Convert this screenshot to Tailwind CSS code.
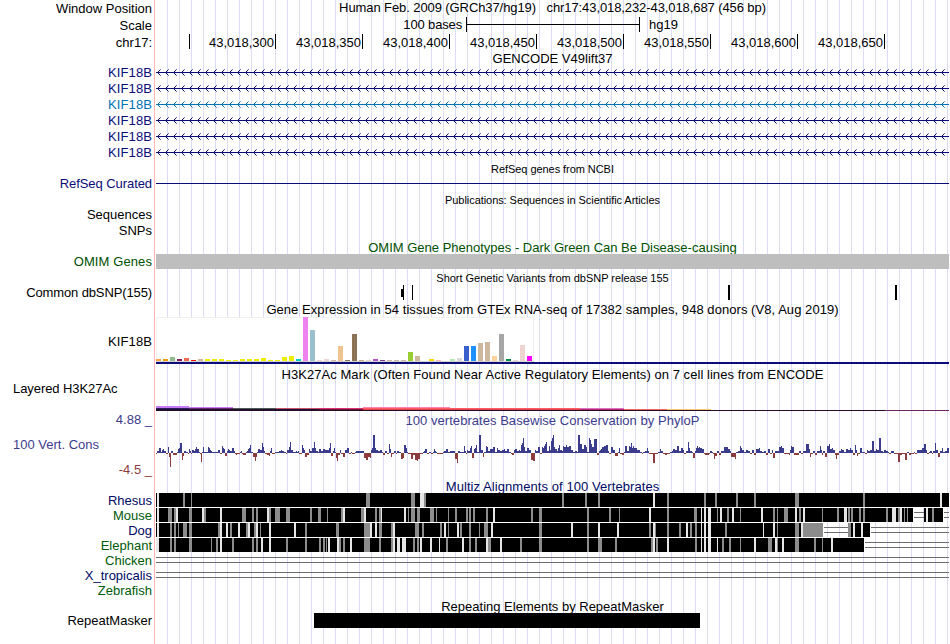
<!DOCTYPE html>
<html lang="en">
<head>
    <meta charset="UTF-8">
    <meta name="viewport" content="width=device-width, initial-scale=1.0">
    <title>chr17:43,018,232-43,018,687 hg19</title>
    <script src="https://cdn.jsdelivr.net/npm/@tailwindcss/browser@4"></script>
</head>
<body class="bg-white overflow-hidden">

    <div class="flex w-[950px] h-[644px] overflow-hidden font-['Liberation_Sans',Arial,sans-serif] text-[13px] leading-4 text-black whitespace-nowrap">

        <!-- Labels -->
        <div class="w-[154px] shrink-0 pt-px pr-0.5 flex flex-col text-right text-[#0c0c78]">
            <div class="h-[17px] text-black">Window Position</div>
            <div class="h-[17px] text-black">Scale</div>
            <div class="h-[30px] text-black">chr17:</div>
            <div class="h-4 tracking-[0.1px]">KIF18B</div>
            <div class="h-4 tracking-[0.1px]">KIF18B</div>
            <div class="h-4 tracking-[0.1px] text-[#0073b4]">KIF18B</div>
            <div class="h-4 tracking-[0.1px]">KIF18B</div>
            <div class="h-4 tracking-[0.1px]">KIF18B</div>
            <div class="h-[31px] tracking-[0.1px]">KIF18B</div>
            <div class="h-[31px] tracking-[-0.07px]">RefSeq Curated</div>
            <div class="h-4 text-black">Sequences</div>
            <div class="h-[31px] text-black">SNPs</div>
            <div class="h-[31px] tracking-[0.1px] text-[#005000]">OMIM Genes</div>
            <div class="h-[49px] tracking-[-0.12px] text-black">Common dbSNP(155)</div>
            <div class="h-[47px] tracking-[0.1px] text-black">KIF18B</div>
            <div class="h-[31px] pl-[13px] text-left tracking-[-0.07px] text-black">Layered H3K27Ac</div>
            <div class="h-[25px] text-[#3c3c8c]">4.88 _</div>
            <div class="h-[25px] pl-[13px] text-left text-[#3c3c8c]">100 Vert. Cons</div>
            <div class="h-[31px] text-[#8c3c3c]">-4.5 _</div>
            <div class="h-[15px] text-[#000a64]">Rhesus</div>
            <div class="h-[15px] text-[#005a0a]">Mouse</div>
            <div class="h-[15px] text-[#000a64]">Dog</div>
            <div class="h-[15px] text-[#005a0a]">Elephant</div>
            <div class="h-[15px] text-[#005a0a]">Chicken</div>
            <div class="h-[15px] text-[#000a64]">X_tropicalis</div>
            <div class="h-[30px] text-[#005a0a]">Zebrafish</div>
            <div class="text-black">RepeatMasker</div>
        </div>
        <div class="w-0.5 shrink-0 border-l border-[#ffb4b4]"></div>

        <!-- Tracks -->
        <div class="w-[793px] flex flex-col text-center bg-[repeating-linear-gradient(90deg,transparent_0_11px,#dcdcf5_11px_12px)]">
            <div class="h-4 whitespace-pre tracking-[-0.09px]">Human Feb. 2009 (GRCh37/hg19)   chr17:43,018,232-43,018,687 (456 bp)</div>
            <div class="h-[18px] pt-px flex text-left">
                <div class="w-[307px] pr-px text-right tracking-[-0.15px]">100 bases</div>
                <svg class="ml-[3px] w-[174px] h-[15px]" viewBox="0 0 174 15" shape-rendering="crispEdges"><path d="M0 0h1v7h172v-7h1v15h-1v-7h-172v7h-1z"/></svg>
                <div class="ml-[9px]">hg19</div>
            </div>
            <div id="ruler" class="h-4 flex text-right"></div>
            <div class="h-[14px] pt-px">GENCODE V49lift37</div>
            <svg id="genes" class="w-[793px] h-24" viewBox="156 64 793 96" shape-rendering="crispEdges"></svg>
            <div class="h-[18px] pt-px text-[11px] tracking-[-0.06px]">RefSeq genes from NCBI</div>
            <div class="h-[13px] pt-[5px]"><div class="h-px bg-[#0c0c78]"></div></div>
            <div class="h-12 pt-px text-[11px] tracking-[-0.06px]">Publications: Sequences in Scientific Articles</div>
            <div class="h-[15px] pt-px text-[#005000]">OMIM Gene Phenotypes - Dark Green Can Be Disease-causing</div>
            <div class="h-[15px] bg-[#bebebe]"></div>
            <div class="h-4 pt-px text-[11px] tracking-[-0.02px]">Short Genetic Variants from dbSNP release 155</div>
            <svg class="w-[793px] h-4" viewBox="156 285 793 16" shape-rendering="crispEdges">
                <path d="M403 285h1v15h-1zM401 289h2v8h-2zM412 285h1v15h-1zM728 285h2v15h-2zM895 285h2v15h-2z"/>
            </svg>
            <div class="h-4 pt-px tracking-[0.055px]">Gene Expression in 54 tissues from GTEx RNA-seq of 17382 samples, 948 donors (V8, Aug 2019)</div>
            <svg id="gtex" class="w-[793px] h-[49px]" viewBox="156 317 793 49" shape-rendering="crispEdges"></svg>
            <div class="h-10 pt-px tracking-[0.05px]">H3K27Ac Mark (Often Found Near Active Regulatory Elements) on 7 cell lines from ENCODE</div>
            <svg id="h3k27" class="w-[793px] h-[6px]" viewBox="156 406 793 6" shape-rendering="crispEdges"></svg>
            <div class="h-4 pt-px tracking-[0.04px] text-[#3c3c8c]">100 vertebrates Basewise Conservation by PhyloP</div>
            <svg id="cons" class="w-[793px] h-[50px]" viewBox="156 428 793 50" shape-rendering="crispEdges"></svg>
            <div class="h-[15px] pt-px tracking-[0.07px] text-[#000a64]">Multiz Alignments of 100 Vertebrates</div>
            <svg id="multiz" class="w-[793px] h-[105px]" viewBox="156 493 793 105" shape-rendering="crispEdges"></svg>
            <div class="h-[15px] pt-px">Repeating Elements by RepeatMasker</div>
            <div class="ml-[158px] w-[386px] h-[15px] bg-black"></div>
        </div>
    </div>

    <script>
        const put = (id, html) => document.getElementById(id).innerHTML = html
        const rect = (x, y, w, h, fill) => `<rect x="${x}" y="${y}" width="${w}" height="${h}" fill="${fill}"/>`

        // base position ruler: the first tick has no label
        const ticks = [[34, ''], [86, '43,018,300'], [87, '43,018,350'], [87, '43,018,400'], [87, '43,018,450'], [87, '43,018,500'], [87, '43,018,550'], [87, '43,018,600'], [87, '43,018,650']]
        put('ruler', ticks.map(([w, t]) => `<div class="h-[15px] pt-px pr-px border-r border-black" style="width:${w}px">${t}</div>`).join(''))

        // transcripts on the minus strand
        let s = ''
        for (let i = 0; i < 6; i++) {
            const y = 72 + i * 16
            const c = i == 2 ? '#0073b4' : '#0c0c78'
            s += rect(156, y, 793, 1, c)
            for (let x = 157; x < 948; x += 8) {
                s += `<path fill="${c}" d="M${x + 1} ${y - 1}h1v3h-1zM${x + 2} ${y - 2}h1v1h-1zM${x + 2} ${y + 2}h1v1h-1z"/>`
                s += `<path fill="${c}" opacity=".6" d="M${x + 3} ${y - 3}h1v1h-1zM${x + 3} ${y + 3}h1v1h-1z"/>`
            }
        }
        put('genes', s)

        // GTEx tissues: height, colour
        const gtex = [
            [2, '#ffa54f'], [2, '#ee9a00'], [4, '#8fbc8f'], [2, '#8b1c62'], [3, '#ee6a50'], [1, '#ff0000'], [2, '#cdb79e'],
            [2, '#eeee00'], [2, '#eeee00'], [2, '#eeee00'], [1, '#eeee00'], [1, '#eeee00'], [2, '#eeee00'], [2, '#eeee00'],
            [2, '#eeee00'], [3, '#eeee00'], [1, '#eeee00'], [1, '#eeee00'], [4, '#eeee00'], [5, '#eeee00'], [2, '#00cdcd'],
            [44, '#ee82ee'], [31, '#9ac0cd'], [1, '#eed5d2'], [2, '#eed5d2'], [1, '#cdb79e'], [15, '#eec591'], [1, '#8b7355'],
            [27, '#8b7355'], [1, '#cdaa7d'], [1, '#eed5d2'], [2, '#b452cd'], [1, '#7a378b'], [1, '#cdb79e'], [1, '#cdb79e'],
            [1, '#cdb79e'], [9, '#9acd32'], [5, '#cdb79e'], [0, '#7a67ee'], [2, '#ffd700'], [1, '#ffb6c1'], [0, '#cd9b1d'],
            [2, '#b4eeb4'], [3, '#d9d9d9'], [15, '#3a5fcd'], [15, '#1e90ff'], [18, '#cdb79e'], [19, '#cdb79e'], [5, '#ffd39b'],
            [27, '#a6a6a6'], [2, '#008b45'], [1, '#eed5d2'], [16, '#eed5d2'], [5, '#ff00ff']
        ]
        s = rect(156, 317, 378, 45, '#f0f0f0') + rect(157, 318, 376, 43, '#ffffff') + rect(156, 361, 378, 1, '#d2d2d2')
        gtex.forEach(([h, c], i) => { s += rect(156 + i * 7, 361 - h, 5, h, c) })
        s += rect(156, 362, 793, 2, '#0c0c78')
        put('gtex', s)

        // layered H3K27Ac: x, y, width, height, colour
        put('h3k27', [
            [156, 406, 33, 2, '#c57cf5'], [189, 407, 44, 1, '#c57cf5'],
            [156, 408, 33, 1, '#2b1c66'], [189, 408, 44, 1, '#6b2a70'], [233, 408, 43, 1, '#505a55'],
            [276, 408, 43, 1, '#c8506a'], [319, 408, 44, 1, '#d83070'],
            [156, 409, 163, 1, '#1e1030'], [319, 409, 44, 1, '#701238'],
            [363, 407, 87, 1, '#ff82b4'], [363, 408, 217, 1, '#fa5f64'], [580, 408, 44, 1, '#d873c8'],
            [363, 409, 217, 1, '#e8404f'], [580, 409, 44, 1, '#c02468'], [624, 409, 43, 1, '#f86464'], [667, 409, 44, 1, '#f5c86e'],
            [156, 410, 729, 1, '#280c24'], [885, 410, 64, 1, '#6e2460']
        ].map(r => rect(...r)).join(''))

        // phyloP: each entry is "offset:height" and runs up to the next one, offsets in thirds of a pixel
        const cons = [
            [150, '18:-1 21:2 27:5 33:1 36:3 39:4 42:2 48:-1 54:6 57:-4 60:-14 63:2 69:-2 81:1 84:4 87:5 90:10 96:-7 99:-3 102:2 108:1 114:-1 117:4 120:2 123:-1 126:3 132:2 135:4 138:6 141:4 147:1 150:-1 153:-9 156:1 159:6 162:1 174:6 177:5 180:3 183:2 186:1 204:3 210:-1 216:7 219:5 222:4 225:-3 231:2 234:4 237:3 240:2 246:5 252:2 255:-1 258:-2 261:-1 270:1 273:2 276:-1 279:-2 288:1 291:2 294:4 297:5 300:8 303:1 309:-4 315:-8 318:-4 321:1 324:4 330:3 336:10 339:6 342:2 345:-1 351:-2 357:-3 360:2 363:5 366:-1 375:1 387:2 393:3 396:2 402:1 408:-1 411:3 417:6 420:11 423:3 429:1 438:2 441:1 444:2 447:-1 456:8 459:5 462:3 465:-4 471:-2 477:4 480:2 486:5 492:11 495:5 498:2 504:1 507:4 513:2 519:4 525:3 537:5 540:10 543:-3 549:2 552:5 555:1 558:-5 561:-8 564:-2 570:3 573:-1 579:-4 585:3 591:5 597:-1 603:1 606:-1 615:1 618:2 642:-5 648:-7 654:-4 660:-5 663:3 666:5 669:18 675:5 678:3 684:2 690:3 696:1 699:-2 705:2 711:-1 717:9 720:4 723:-4 726:-1 732:2 738:-1 741:2 747:1 753:-6 759:-5 762:8 768:5 771:1 774:-1'],
            [410, '3:-6 9:-2 15:-7 21:-8 24:-6 30:-1 39:1 42:2 45:4 51:-1 57:1 63:-1 69:1 72:4 75:2 78:1 81:-1 99:1 102:2 108:4 114:1 120:2 135:-6 141:-10 144:2 150:1 162:7 165:2 168:-1 171:3 174:2 180:5 183:7 186:-5 192:4 195:5 198:8 201:1 207:18 213:3 219:-4 222:1 228:7 231:6 234:2 240:4 249:6 255:1 261:5 264:3 270:2 276:3 282:4 285:2 291:4 297:1 303:-1 306:-2 312:3 315:4 321:2 327:3 330:2 333:8 336:10 339:15 342:6 345:2 351:5 357:3 363:-7 369:-8 375:3 378:2 384:6 390:-1 396:6 399:5 402:7 405:9 408:11 411:2 417:7 420:3 423:12 426:15 429:18 432:6 435:4 441:2 444:5 447:8 450:3 456:2 459:7 462:6 468:8 471:6 477:7 483:3 489:1 495:2 501:1 504:18 510:9 516:4 522:8 528:6 531:1 537:15 540:13 543:9 546:6 552:14 561:-2 567:2 570:3 573:4 576:6 582:7 588:8 594:2 597:-1 603:6 609:3 615:-3 624:1 627:5 630:-1 636:-2 642:1 645:7 651:2 657:7 660:6 663:10 666:5 669:7 672:5 681:3 690:1 696:-1 699:1 705:2 711:5 714:2 717:-1 729:-10 735:-1 744:1 750:4 753:2 759:-1 765:-2 771:-1'],
            [670, '0:1 6:2 9:4 15:3 21:7 27:2 33:5 39:3 42:-1 48:2 54:11 57:5 60:2 66:1 69:-5 75:2 78:5 81:7 84:5 87:6 90:5 96:4 102:-1 105:-2 117:-1 120:2 126:1 129:-1 132:-6 135:-3 141:2 147:-2 153:2 162:6 174:4 180:2 183:-4 195:-6 198:1 204:2 210:7 213:5 216:3 222:1 228:3 234:2 240:-1 246:3 252:-2 258:4 267:5 270:2 276:1 282:2 288:-2 294:4 300:-1 306:3 309:-5 315:2 327:6 333:7 336:5 342:-1 357:-2 360:3 363:7 366:6 372:-2 387:2 393:-1 399:2 408:9 417:4 420:-4 423:-1 429:2 435:-2 441:2 450:7 453:3 456:-2 459:2 465:-4 471:7 477:9 480:4 486:5 489:3 495:-2 498:-6 501:-2 507:2 513:4 516:3 522:1 528:4 534:3 540:5 543:3 549:-2 555:8 558:3 561:-3 564:-1 570:5 576:1 585:-1 591:3 594:2 600:3 606:12 612:2 618:4 621:3 627:15 633:2 639:1 642:3 648:2 654:1 657:-1 663:2 672:-1 684:-9 690:-2 696:-1 705:-7 711:1 717:-2 723:-1 732:1 735:-1 741:3 756:5 762:9 768:3 771:-1 777:1 780:2 786:-1 789:2 795:10 798:3 804:-4 810:2 816:5 819:1 825:2 831:5']
        ]
        const vals = cons.flatMap(([x0, t]) => t.split(' ').map(p => p.split(':').map(Number)).map(([x, h]) => [x0 + x / 3, h]))
        s = ''
        vals.forEach(([x, h], i) => {
            const w = (vals[i + 1] ? vals[i + 1][0] : 949) - x
            s += h > 0 ? rect(x, 453 - h, w, h, '#3c3c8c') : rect(x, 453, w, -h, '#8c3c3c')
        })
        put('cons', s)

        // alignment blocks; cuts = "from-to" with G mid grey, L light grey
        const multiz = [
            { blocks: [[156, 949]], cuts: [
                [150, 'L21-27 G99-105 G123-126 G648-660 G783-795'],
                [410, 'L30-42 G42-48 G456-462 G525-531 G564-570 L729-735 G771-777'],
                [670, 'G102-108 G135-141 G198-204 G252-258 G375-387 G579-585 L810-816']] },
            { blocks: [[156, 913], [924, 943]], cuts: [
                [150, 'L21-27 G54-66 G72-78 L78-84 G117-126 L156-162 G162-168 L210-216 G276-288 G306-312 G318-324 L351-357 G357-363 G375-390 G408-420 G480-486 G504-513 G531-534 G573-579 L579-585 G633-642 L642-648 G675-681 G687-693 L693-696 L762-768 G774-777 G783-795'],
                [410, 'G21-30 G60-72 G78-81 G114-117 G135-141 G168-174 G177-183 G189-195 G228-234 L249-255 G363-369 G387-396 G531-537 G597-603 G627-630 L717-723 G771-777'],
                [670, 'G72-81 L93-96 L102-108 L114-123 G141-144 L150-156 G171-177 L186-192 G210-213 L273-279 G309-315 G321-324 G342-354 L375-381 G387-393 L399-405 G456-459 G501-507 L522-531 G534-540 G543-549 G567-573 G579-585 G648-654 L666-678 G684-690 L690-696 G702-705 G711-714 L768-774 G786-792']] },
            { blocks: [[156, 823], [848, 870]], cuts: [
                [150, 'L21-27 G60-66 G72-78 G84-87 G99-111 G117-126 G204-210 L210-216 L228-234 G240-246 L264-270 G288-294 L294-300 G312-318 L318-324 G330-333 L357-363 L432-438 G465-471 G558-567 G642-660 L660-666 L675-681 G687-696 G723-729 L729-735 G795-807'],
                [410, 'G36-42 G90-96 L102-108 G114-117 L141-147 G150-156 G177-183 G207-210 G222-234 L243-249 G387-396 L483-489 G531-537 L564-570 L621-627 G717-723 L729-735 G735-738 G771-777'],
                [670, 'G27-33 L48-54 G60-66 G75-81 L93-96 L102-108 L114-123 G165-171 L279-282 L309-315 G321-324 G375-387 L393-399 G399-459 G534-543 L549-555 L573-579']] },
            { blocks: [[156, 864]], cuts: [
                [150, 'L18-27 G60-66 G72-78 G117-126 G183-186 G198-204 L210-216 G246-252 G306-312 G318-324 L333-339 L357-363 G408-414 G465-471 G507-513 G519-525 G528-531 L534-540 L561-567 G567-573 G579-585 L600-606 G642-660 G687-693 G723-729 L729-735 L741-750 L756-768'],
                [410, 'G9-15 G21-27 L30-36 L60-66 L87-90 G108-114 L156-162 G177-183 G195-201 L228-234 G234-243 L270-276 G330-336 G387-396 G531-537 G564-576 G615-621 G723-729 L729-735 G738-744 L771-777'],
                [670, 'G75-81 L93-96 L102-108 L114-123 L141-144 G156-162 G177-183 G210-213 L252-258 G294-306 L315-321 G321-324 L336-342 G375-387 G432-438 G456-459 L483-489']] },
            { blocks: [], cuts: [] },
            { blocks: [], cuts: [] }
        ]
        s = rect(156, 507, 793, 1, '#ffffff') + rect(156, 522, 757, 1, '#ffffff') + rect(156, 537, 714, 1, '#ffffff')
        multiz.forEach((sp, i) => {
            const y = 493 + i * 15
            s += rect(156, y + 4, 793, 1, '#6e6e6e') + rect(156, y + 9, 793, 1, '#6e6e6e')
            sp.blocks.forEach(([a, b]) => {
                s += rect(a, y, b - a + (b < 949 ? 1 : 0), 14, '#ffffff') + rect(a, y, b - a, 14, '#000000')
            })
            sp.cuts.forEach(([x0, t]) => t.split(' ').forEach(c => {
                const [a, b] = c.slice(1).split('-').map(Number)
                s += rect(x0 + a / 3, y, (b - a) / 3, 14, c[0] == 'G' ? '#8c8c8c' : '#e6e6e6')
            }))
        })
        put('multiz', s)
    </script>
</body>
</html>
